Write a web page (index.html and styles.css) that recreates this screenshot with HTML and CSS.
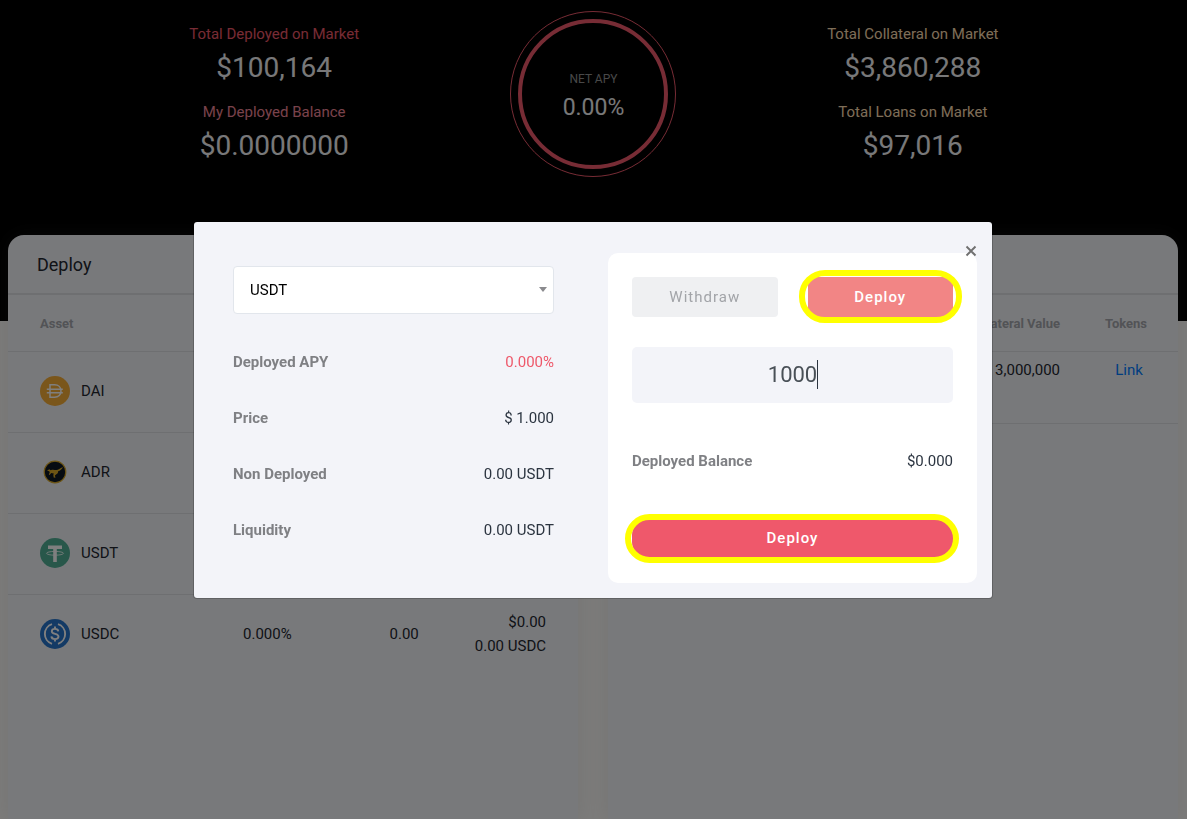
FILE: index.html
```html
<!DOCTYPE html>
<html lang="en">
<head>
<meta charset="utf-8">
<title>Deploy</title>
<link rel="stylesheet" href="styles.css">
</head>
<body>
<header class="hero">
  <div class="stats">
    <div class="stat-col">
      <div class="stat-label red">Total Deployed on Market</div>
      <div class="stat-value">$100,164</div>
      <div class="stat-label rose">My Deployed Balance</div>
      <div class="stat-value">$0.0000000</div>
    </div>
    <div class="apy-ring">
      <div class="apy-core">
        <div class="apy-label">NET APY</div>
        <div class="apy-value">0.00%</div>
      </div>
    </div>
    <div class="stat-col">
      <div class="stat-label sand">Total Collateral on Market</div>
      <div class="stat-value">$3,860,288</div>
      <div class="stat-label sand">Total Loans on Market</div>
      <div class="stat-value">$97,016</div>
    </div>
  </div>
</header>

<main class="panels">
  <section class="panel">
    <h2 class="panel-title">Deploy</h2>
    <table class="assets">
      <colgroup><col class="c-asset"><col class="c-apy"><col class="c-bal"><col></colgroup>
      <thead><tr><th>Asset</th><th></th><th></th><th></th></tr></thead>
      <tbody>
        <tr>
          <td><div class="asset">
            <svg class="coin" viewBox="0 0 30 30"><circle cx="15" cy="15" r="15" fill="#f5ac37"/><g fill="none" stroke="#fff" stroke-width="1.5"><path d="M10 8.800h4.500c4 0 6.500 2.600 6.500 6.200s-2.500 6.200-6.500 6.200H10zM6.800 13.200h16M6.800 16.800h16"/></g></svg>
            DAI</div></td><td></td><td></td><td></td>
        </tr>
        <tr>
          <td><div class="asset">
            <svg class="coin" viewBox="0 0 30 30"><circle cx="15" cy="15" r="10.800" fill="#0c1622" stroke="#d9a928" stroke-width="1.200"/><path fill="#d9a928" d="M7 13.800l2.200-1.500 1.500.9c2.500-1 4-.1 5.700-.2 2-.2 3.500-1.600 6.600-3-1 2.200-2.900 3.800-4.900 4.300.2 1.300-.5 2.300-1.700 2.900l-1.500 1.200.6 2.400-1.800-.3-.4-2.500.5-1.400-2.600-.5-1.600 1.900-.8-.4.900-2-.4-1.300z"/></svg>
            ADR</div></td><td></td><td></td><td></td>
        </tr>
        <tr>
          <td><div class="asset">
            <svg class="coin" viewBox="0 0 30 30"><circle cx="15" cy="15" r="15" fill="#50af95"/><path fill="#fff" d="M8 7.500h14v3.500h-5.200V24h-3.600V11H8z"/><ellipse cx="15" cy="15.300" rx="8.500" ry="1.900" fill="none" stroke="#fff" stroke-width=".8"/></svg>
            USDT</div></td><td></td><td></td><td></td>
        </tr>
        <tr>
          <td><div class="asset">
            <svg class="coin" viewBox="0 0 30 30"><circle cx="15" cy="15" r="15" fill="#2775ca"/><g fill="none" stroke="#fff" stroke-width="1.900"><path d="M12 5.200a10.300 10.300 0 0 0 0 19.600M18 5.200a10.300 10.300 0 0 1 0 19.600"/><path d="M18.300 12.300c-.2-1.700-1.400-2.400-3.300-2.400-2 0-3.200.9-3.200 2.400 0 3.600 6.700 1.600 6.700 5.300 0 1.600-1.400 2.500-3.500 2.500s-3.500-.9-3.600-2.700M15 7.500v2.400M15 20v2.500"/></g></svg>
            USDC</div></td>
          <td class="mid">0.000%</td><td class="mid">0.00</td><td class="end">$0.00<br>0.00 USDC</td>
        </tr>
      </tbody>
    </table>
  </section>
  <section class="panel">
    <h2 class="panel-title">&nbsp;</h2>
    <table class="loans">
      <colgroup><col><col class="c-value"><col class="c-tokens"></colgroup>
      <thead><tr><th></th><th class="end">Collateral Value</th><th class="mid">Tokens</th></tr></thead>
      <tbody><tr><td></td><td class="end">3,000,000</td><td class="link"><a href="#">Link</a></td></tr></tbody>
    </table>
  </section>
</main>

<div class="backdrop">
  <div class="modal" role="dialog" aria-label="Deploy">
    <div class="info">
      <div class="picker">
        <select aria-label="Asset"><option>USDT</option></select>
      </div>
      <dl class="facts">
        <div class="fact"><dt>Deployed APY</dt><dd class="pink">0.000%</dd></div>
        <div class="fact"><dt>Price</dt><dd>$ 1.000</dd></div>
        <div class="fact"><dt>Non Deployed</dt><dd>0.00 USDT</dd></div>
        <div class="fact"><dt>Liquidity</dt><dd>0.00 USDT</dd></div>
      </dl>
    </div>
    <form class="card">
      <div class="tabs">
        <button type="button" class="btn muted">Withdraw</button>
        <div class="ringed tab-ring"><button type="button" class="btn coral">Deploy</button></div>
      </div>
      <div class="amount"><input type="text" value="1000" aria-label="Amount"></div>
      <div class="fact balance"><span class="term">Deployed Balance</span><span>$0.000</span></div>
      <div class="ringed submit-ring"><button type="button" class="btn submit">Deploy</button></div>
    </form>
    <button type="button" class="close" aria-label="Close"><svg viewBox="0 0 12 12"><path d="M1.500 1.500l9 9M10.500 1.500l-9 9" stroke="#707070" stroke-width="1.900"/></svg></button>
  </div>
</div>
</body>
</html>
```
FILE: styles.css
```css
* { box-sizing: border-box; }
html, body { height: 100%; }
body {
  margin: 0;
  display: flex;
  flex-direction: column;
  overflow: hidden;
  background: #f8f7f5;
  color: #23262f;
  font: 15px/24px Roboto, "Liberation Sans", sans-serif;
}
button, input, select { font: inherit; }

.hero { flex: none; min-height: 321px; padding: 11px 16px 0; background: #000; }
.stats {
  display: grid;
  grid-template-columns: repeat(3, 1fr);
  align-items: center;
  justify-items: center;
  max-width: 958px;
  margin: 0 auto;
}
.stat-col { text-align: center; }
.stat-label { line-height: 24px; }
.stat-value { padding-top: 2px; font-size: 28px; line-height: 40px; color: #f0f0f2; }
.stat-value + .stat-label { margin-top: 12px; }
.red { color: #ee586a; }
.rose { color: #f08698; }
.sand { color: #fbdcb0; }
.apy-ring { padding: 7px; border: 1px solid #ee586a; border-radius: 50%; }
.apy-core {
  display: flex;
  flex-direction: column;
  align-items: center;
  justify-content: center;
  width: 150px;
  height: 150px;
  padding-top: 4px;
  border: 4px solid #ee586a;
  border-radius: 50%;
}
.apy-label { font-size: 12px; line-height: 24px; color: #909090; }
.apy-value { font-size: 23px; line-height: 34px; color: #f0f0f2; }

.panels {
  flex: 1;
  display: grid;
  grid-template-columns: 1fr 1fr;
  gap: 30px;
  margin: -86px 9px 0 8px;
}
.panel {
  background: #f1f3f7;
  border-radius: 16px 16px 0 0;
  box-shadow: 0 0 20px rgba(128, 128, 128, .12);
}
.panel-title {
  margin: 0;
  padding: 18px 29px 16px;
  border-bottom: 2px solid #dcdee3;
  font-size: 18px;
  font-weight: 400;
  line-height: 24px;
}
table { width: 100%; table-layout: fixed; border-collapse: collapse; }
.c-asset { width: 32%; }
.c-apy { width: 27%; }
.c-bal { width: 21%; }
.c-value { width: 30%; }
.c-tokens { width: 104px; }
th {
  height: 56px;
  padding: 2px 0 0 32px;
  border-bottom: 1px solid #dcdee3;
  color: #a4a6ac;
  font-size: 13px;
  font-weight: 700;
  text-align: left;
}
td { padding: 0; }
.mid { padding-left: 0; text-align: center; }
.assets td { height: 81px; padding-bottom: 2px; border-bottom: 1px solid #dcdee3; }
.assets tr:last-child td { border-bottom: 0; }
.asset { display: flex; align-items: center; gap: 11px; padding-left: 32px; }
.coin { width: 30px; height: 30px; }
.assets .end { padding-right: 32px; text-align: right; }
.loans .end { padding-right: 14px; text-align: right; }
.loans td { height: 72px; padding-top: 6px; border-bottom: 1px solid #dcdee3; vertical-align: top; }
.loans .link { padding-left: 6px; text-align: center; }
a { color: #007bff; text-decoration: none; }

.backdrop {
  position: fixed;
  inset: 0;
  display: flex;
  align-items: center;
  justify-content: center;
  padding-right: 1px;
  background: rgba(0, 0, 0, .5);
}
.modal {
  position: relative;
  display: grid;
  grid-template-columns: 321fr 369fr;
  gap: 54px;
  width: 100%;
  max-width: 800px;
  padding: 31px 15px 15px 39px;
  border: 1px solid rgba(0, 0, 0, .2);
  border-radius: 4px;
  background: #f3f4f9;
  background-clip: padding-box;
  color: #2b3440;
}
.info { padding-top: 13px; }
.picker { position: relative; }
.picker select {
  display: block;
  width: 100%;
  height: 48px;
  padding: 0 16px;
  border: 1px solid #e2e6ec;
  border-radius: 4px;
  background: #fff;
  color: #000;
  appearance: none;
}
.picker::after {
  content: "";
  position: absolute;
  top: 21px;
  right: 7px;
  border: 4px solid transparent;
  border-top: 5px solid #8a8a8e;
  border-bottom: 0;
}
.facts { margin: 20px 0 0; }
.fact { display: flex; align-items: center; justify-content: space-between; height: 56px; }
dt, .term { color: #7f8084; font-weight: 700; }
dd { margin: 0; }
.pink { color: #ee586a; }

.card { padding: 24px 24px 25px; border-radius: 10px; background: #fff; }
.tabs { display: grid; grid-template-columns: 1fr 1fr; gap: 30px; }
.btn {
  display: block;
  width: 100%;
  height: 40px;
  padding: 0;
  border: 0;
  border-radius: 4px;
  color: #fff;
  letter-spacing: 1px;
}
.muted { background: #eff0f2; color: #a2a4a8; }
.coral { background: #f28585; font-weight: 500; }
.submit { height: 39px; border-radius: 16px; background: #ef586b; font-weight: 500; }
.ringed { position: relative; }
.ringed::after {
  content: "";
  position: absolute;
  inset: -7px -9px -6px;
  border: 6px solid #ff0;
  border-radius: 26px;
  pointer-events: none;
}
.submit-ring::after { inset: -5px -6px -5px -7px; }
.amount { position: relative; margin-top: 30px; }
.amount input {
  display: block;
  width: 100%;
  height: 56px;
  padding: 0;
  border: 0;
  border-radius: 5px;
  background: #f3f4f9;
  color: #495057;
  font-size: 22px;
  text-align: center;
}
.amount::after {
  content: "";
  position: absolute;
  top: 13px;
  left: calc(50% + 24px);
  width: 1px;
  height: 29px;
  background: #2b3440;
}
.balance { margin: 30px 0; }
.close {
  position: absolute;
  top: 23px;
  right: 15px;
  width: 12px;
  height: 12px;
  padding: 0;
  border: 0;
  background: none;
}
.close svg { display: block; }
```
